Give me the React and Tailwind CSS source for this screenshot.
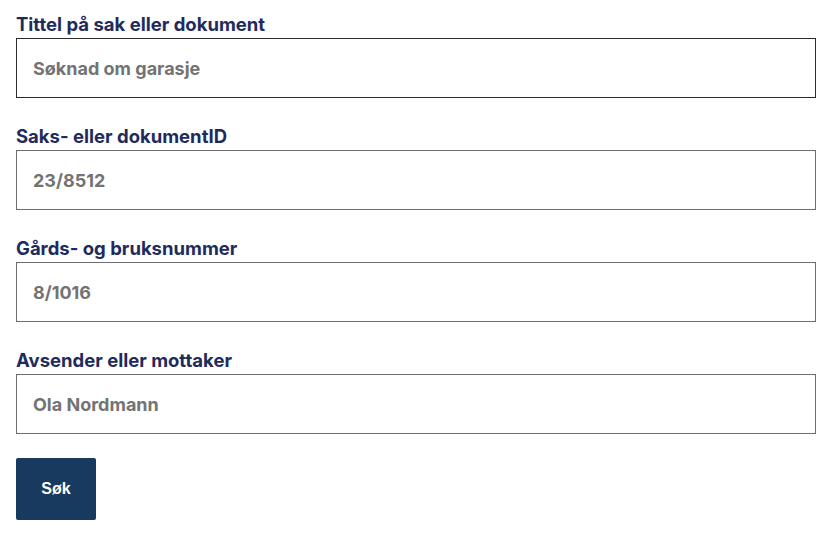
const fields = [
  { label: 'Tittel på sak eller dokument', placeholder: 'Søknad om garasje', active: true },
  { label: 'Saks- eller dokumentID', placeholder: '23/8512' },
  { label: 'Gårds- og bruksnummer', placeholder: '8/1016' },
  { label: 'Avsender eller mottaker', placeholder: 'Ola Nordmann' },
];

export default function App() {
  return (
    <div
      className="bg-white px-4 pt-3 pb-5 min-h-screen"
      style={{ fontFamily: 'Inter, "Noto Sans", sans-serif' }}
    >
      <form className="flex flex-col gap-[26px] max-w-[800px]" onSubmit={(e) => e.preventDefault()}>
        {fields.map((field, idx) => (
          <div key={idx} className="flex flex-col">
            <label className="text-[18.5px] leading-6 font-bold text-[#1e2b5c] mb-[2px]">
              {field.label}
            </label>
            <input
              type="text"
              placeholder={field.placeholder}
              className={
                'h-[60px] w-full border px-4 text-[18px] font-bold text-[#333] placeholder:text-[#737373] outline-none ' +
                (field.active ? 'border-[#2b2b2b]' : 'border-[#6e6e6e]')
              }
            />
          </div>
        ))}
      </form>
      <button
        type="button"
        className="mt-6 h-[62px] w-20 rounded-[2px] bg-[#173a5e] text-white text-[16px] font-bold"
        style={{ fontFamily: '"Liberation Sans", Arial, sans-serif' }}
      >
        Søk
      </button>
    </div>
  );
}
